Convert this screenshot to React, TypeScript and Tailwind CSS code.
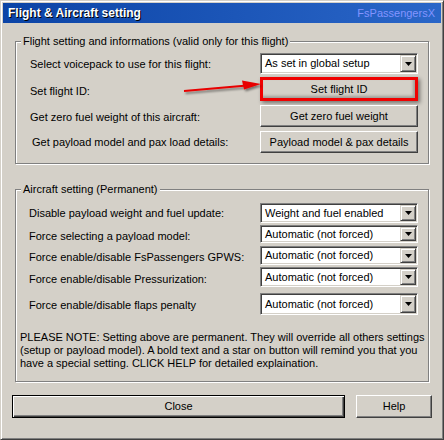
import React from "react";

const FONT = { fontFamily: '"Liberation Sans", Arial, sans-serif' };

function DropBtn() {
  return (
    <div className="w-[16px] h-full bg-[#d4d0c8] border border-t-[#d4d0c8] border-l-[#d4d0c8] border-r-[#404040] border-b-[#404040] shadow-[inset_1px_1px_0_#fff,inset_-1px_-1px_0_#808080] flex items-center justify-center">
      <svg width="7" height="4" viewBox="0 0 7 4">
        <polygon points="0,0 7,0 3.5,4" fill="#000" />
      </svg>
    </div>
  );
}

function Combo({ value, cls }: { value: string; cls: string }) {
  return (
    <div
      className={`flex w-[158px] ${cls} bg-white border border-t-[#808080] border-l-[#808080] border-r-white border-b-white shadow-[inset_1px_1px_0_#404040,inset_-1px_-1px_0_#d4d0c8] p-[1px]`}
    >
      <div className="flex-1 flex items-center pl-[3px] text-[11px] leading-[13px] text-black whitespace-nowrap">
        {value}
      </div>
      <DropBtn />
    </div>
  );
}

function Btn({ label, cls }: { label: string; cls: string }) {
  return (
    <div
      className={`w-[158px] ${cls} bg-[#d4d0c8] border border-t-white border-l-white border-r-[#404040] border-b-[#404040] shadow-[inset_-1px_-1px_0_#808080] flex items-center justify-center text-[11px] leading-[13px] text-black`}
    >
      {label}
    </div>
  );
}

export default function App() {
  return (
    <div style={FONT} className="relative w-[444px] h-[440px] bg-[#d4d0c8] border border-t-[#d4d0c8] border-l-[#d4d0c8] border-r-[#404040] border-b-[#404040] shadow-[inset_1px_1px_0_#fff,inset_-1px_-1px_0_#808080] p-[2px] flex flex-col overflow-hidden">
      {/* Title bar */}
      <div className="h-[20px] flex items-center justify-between bg-gradient-to-r from-[#0b44a6] to-[#2a66c8] pl-[5px] pr-[6px]">
        <span className="text-white font-bold text-[12px] leading-[14px] [text-shadow:1px_1px_0_#000]">
          Flight &amp; Aircraft setting
        </span>
        <span className="text-[#8494ff] text-[11px] leading-[13px]">FsPassengersX</span>
      </div>

      {/* Group 1 */}
      <div className="relative ml-[12px] mt-[18px] w-[414px] h-[123px] border border-[#808080] shadow-[inset_1px_1px_0_#fff,1px_1px_0_#fff] pt-[11px] pl-[14px]">
        <span className="absolute left-[5px] top-[-7px] bg-[#d4d0c8] px-[2px] text-[11px] leading-[13px] text-black whitespace-nowrap">
          Flight setting and informations (valid only for this flight)
        </span>
        <div className="flex h-[26px]">
          <div className="w-[230px] mt-[5px] text-[11px] leading-[13px]">Select voicepack to use for this flight:</div>
          <Combo value="As set in global setup" cls="h-[21px]" />
        </div>
        <div className="flex h-[26px]">
          <div className="w-[230px] mt-[6px] text-[11px] leading-[13px]">Set flight ID:</div>
          <div className="w-[158px] h-[24px] -mt-[2px] border-[3px] border-[#f00000] bg-[#d4d0c8] shadow-[2px_2px_4px_rgba(0,0,0,0.45),inset_-2px_-2px_3px_rgba(0,0,0,0.25)] flex items-center justify-center text-[11px] leading-[13px]">
            Set flight ID
          </div>
        </div>
        <div className="flex h-[26px]">
          <div className="w-[230px] mt-[6px] text-[11px] leading-[13px]">Get zero fuel weight of this aircraft:</div>
          <Btn label="Get zero fuel weight" cls="h-[22px]" />
        </div>
        <div className="flex h-[22px]">
          <div className="w-[230px] mt-[5px] pl-[2px] text-[11px] leading-[13px]">Get payload model and pax load details:</div>
          <Btn label="Payload model & pax details" cls="h-[22px]" />
        </div>
      </div>

      {/* Group 2 */}
      <div className="relative ml-[12px] mt-[25px] w-[414px] h-[193px] border border-[#808080] shadow-[inset_1px_1px_0_#fff,1px_1px_0_#fff] pt-[13px] pl-[13px]">
        <span className="absolute left-[5px] top-[-7px] bg-[#d4d0c8] px-[2px] text-[11px] leading-[13px] text-black whitespace-nowrap">
          Aircraft setting (Permanent)
        </span>
        <div className="flex h-[22px]">
          <div className="w-[231px] mt-[4px] text-[11px] leading-[13px]">Disable payload weight and fuel update:</div>
          <Combo value="Weight and fuel enabled" cls="h-[20px]" />
        </div>
        <div className="flex h-[21px]">
          <div className="w-[231px] mt-[5px] text-[11px] leading-[13px]">Force selecting a payload model:</div>
          <Combo value="Automatic (not forced)" cls="h-[18px]" />
        </div>
        <div className="flex h-[21px]">
          <div className="w-[231px] mt-[5px] text-[11px] leading-[13px]">Force enable/disable FsPassengers GPWS:</div>
          <Combo value="Automatic (not forced)" cls="h-[19px]" />
        </div>
        <div className="flex h-[26px]">
          <div className="w-[231px] mt-[6px] text-[11px] leading-[13px]">Force enable/disable Pressurization:</div>
          <Combo value="Automatic (not forced)" cls="h-[20px]" />
        </div>
        <div className="flex h-[22px]">
          <div className="w-[231px] mt-[6px] text-[11px] leading-[13px]">Force enable/disable flaps penalty</div>
          <Combo value="Automatic (not forced)" cls="h-[22px]" />
        </div>
        <p className="mt-[16px] -ml-[9px] text-[11px] leading-[13px] text-black whitespace-nowrap">
          PLEASE NOTE: Setting above are permanent. They will override all others settings
          <br />
          (setup or payload model). A bold text and a star on button will remind you that you
          <br />
          have a special setting. CLICK HELP for detailed explaination.
        </p>
      </div>

      {/* Bottom buttons */}
      <div className="flex mt-[13px] ml-[9px]">
        <div className="w-[333px] h-[23px] border border-black bg-[#d4d0c8] shadow-[inset_1px_1px_0_#fff,inset_-1px_-1px_0_#404040,inset_-2px_-2px_0_#808080] flex items-center justify-center text-[11px] leading-[13px]">
          Close
        </div>
        <div className="ml-[11px] w-[76px] h-[23px] bg-[#d4d0c8] border border-t-white border-l-white border-r-[#404040] border-b-[#404040] shadow-[inset_-1px_-1px_0_#808080] flex items-center justify-center text-[11px] leading-[13px]">
          Help
        </div>
      </div>

      {/* Red annotation arrow */}
      <svg className="absolute left-0 top-0 pointer-events-none" width="444" height="440" viewBox="0 0 444 440">
        <defs>
          <filter id="sh" x="-20%" y="-50%" width="140%" height="200%">
            <feDropShadow dx="1.5" dy="2" stdDeviation="1.2" floodColor="#000" floodOpacity="0.45" />
          </filter>
        </defs>
        <g filter="url(#sh)">
          <line x1="183" y1="90" x2="246" y2="84.5" stroke="#e80000" strokeWidth="2" />
          <polygon points="260,83 241,79.5 243,88.5" fill="#e80000" />
        </g>
      </svg>
    </div>
  );
}
